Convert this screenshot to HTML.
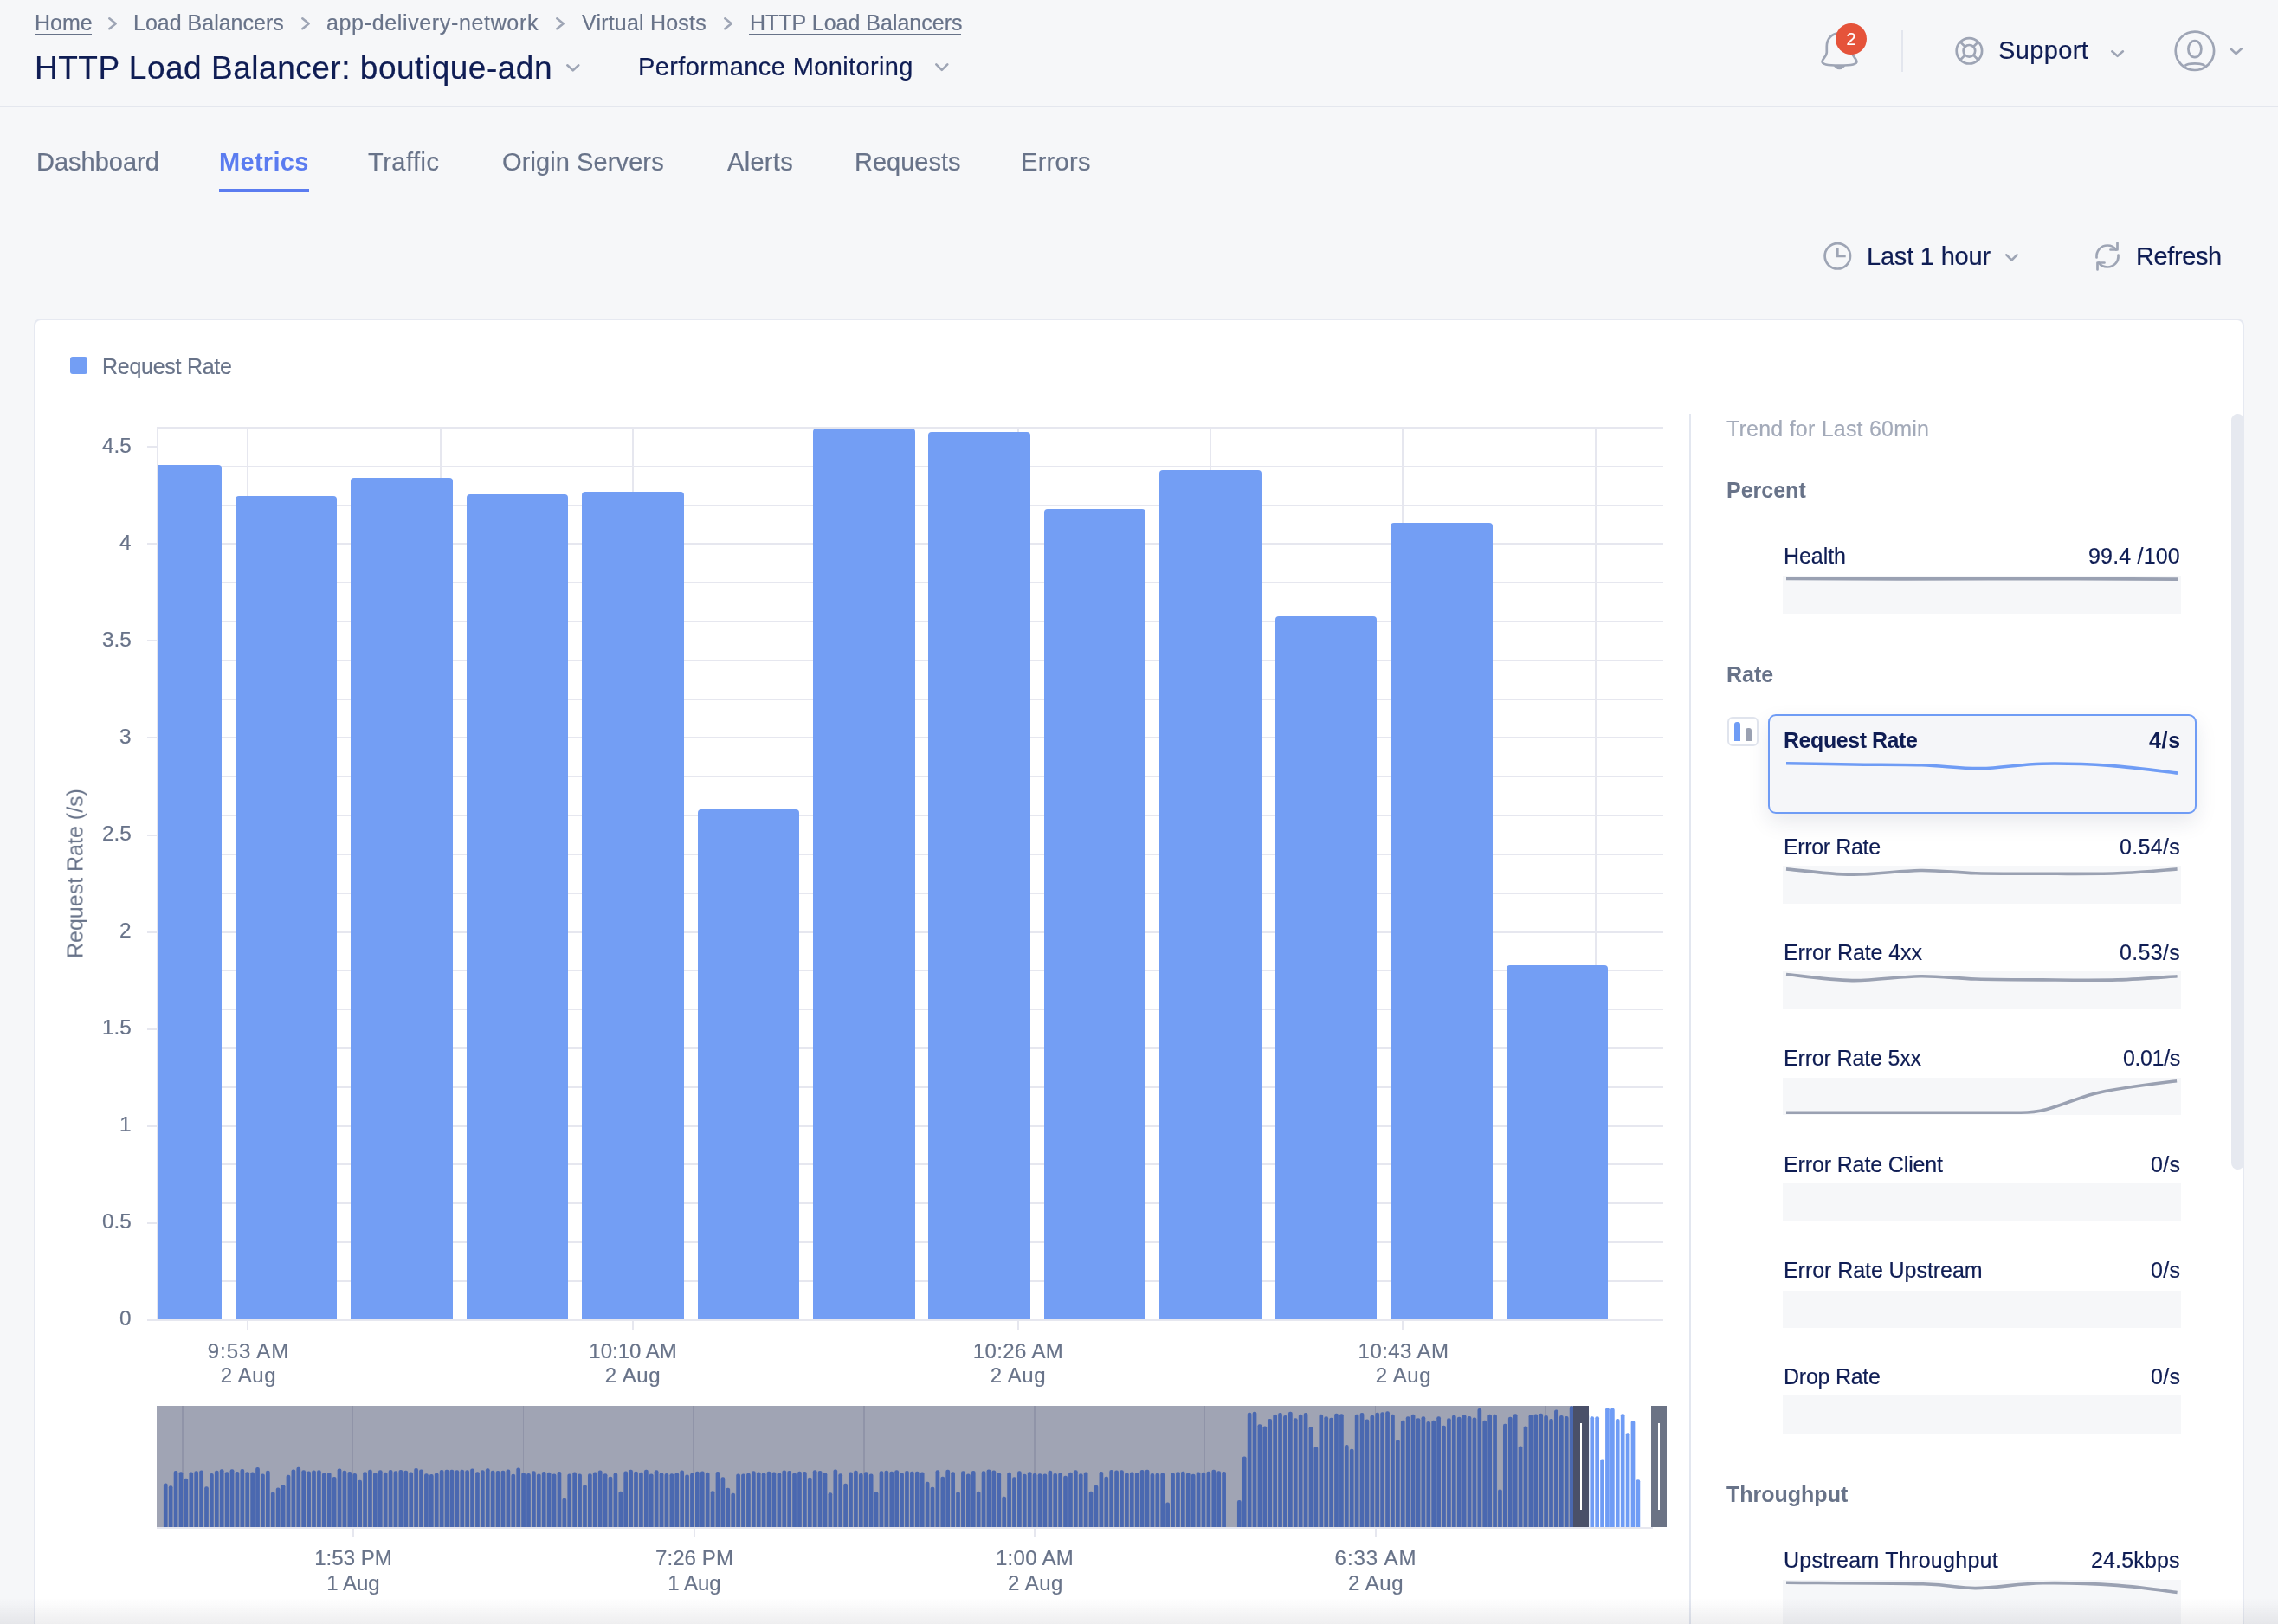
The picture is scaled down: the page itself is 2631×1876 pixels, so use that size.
<!DOCTYPE html>
<html><head><meta charset="utf-8"><title>HTTP Load Balancer</title>
<style>
html,body{margin:0;padding:0;width:2631px;height:1876px;overflow:hidden;background:#f6f7f9;font-family:"Liberation Sans", sans-serif;}
.t{position:absolute;line-height:1;white-space:nowrap;will-change:transform;}
.w{-webkit-text-stroke:0.2px currentColor;}
.r{position:absolute;}
.s{position:absolute;overflow:visible;}
</style></head><body>
<div class="t w" style="top:13.94px;font-size:25px;color:#687389;left:39.50px;">Home</div><div class="r" style="left:39.50px;top:39.20px;width:66.00px;height:2.00px;background:#687389;"></div><svg class="s" style="left:123px;top:18px;" width="14" height="18.5" viewBox="0 0 14 18.5"><polyline points="3.30,3.30 10.70,9.25 3.30,15.20" fill="none" stroke="#9ea5b5" stroke-width="2.6" stroke-linecap="round" stroke-linejoin="round"/></svg><div class="t w" style="top:13.94px;font-size:25px;color:#687389;left:154.40px;">Load Balancers</div><svg class="s" style="left:346px;top:18px;" width="14" height="18.5" viewBox="0 0 14 18.5"><polyline points="3.30,3.30 10.70,9.25 3.30,15.20" fill="none" stroke="#9ea5b5" stroke-width="2.6" stroke-linecap="round" stroke-linejoin="round"/></svg><div class="t w" style="top:13.94px;font-size:25px;color:#687389;letter-spacing:0.65px;left:376.70px;">app-delivery-network</div><svg class="s" style="left:640px;top:18px;" width="14" height="18.5" viewBox="0 0 14 18.5"><polyline points="3.30,3.30 10.70,9.25 3.30,15.20" fill="none" stroke="#9ea5b5" stroke-width="2.6" stroke-linecap="round" stroke-linejoin="round"/></svg><div class="t w" style="top:13.94px;font-size:25px;color:#687389;letter-spacing:0.2px;left:671.80px;">Virtual Hosts</div><svg class="s" style="left:834px;top:18px;" width="14" height="18.5" viewBox="0 0 14 18.5"><polyline points="3.30,3.30 10.70,9.25 3.30,15.20" fill="none" stroke="#9ea5b5" stroke-width="2.6" stroke-linecap="round" stroke-linejoin="round"/></svg><div class="t w" style="top:13.94px;font-size:25px;color:#687389;left:865.60px;">HTTP Load Balancers</div><div class="r" style="left:865.40px;top:39.20px;width:244.30px;height:2.00px;background:#687389;"></div><div class="t w" style="top:59.98px;font-size:37px;color:#0f1d54;letter-spacing:0.52px;left:39.50px;">HTTP Load Balancer: boutique-adn</div><svg class="s" style="left:652.2px;top:71.5px;" width="19.6" height="12.7" viewBox="0 0 19.6 12.7"><polyline points="3.30,3.30 9.80,9.40 16.30,3.30" fill="none" stroke="#9ea5b5" stroke-width="2.6" stroke-linecap="round" stroke-linejoin="round"/></svg><div class="t w" style="top:62.55px;font-size:29px;color:#0f1d54;letter-spacing:0.38px;left:737.00px;">Performance Monitoring</div><svg class="s" style="left:1077.8px;top:70.5px;" width="19.6" height="13.1" viewBox="0 0 19.6 13.1"><polyline points="3.30,3.30 9.80,9.80 16.30,3.30" fill="none" stroke="#9ea5b5" stroke-width="2.6" stroke-linecap="round" stroke-linejoin="round"/></svg><div class="r" style="left:0.00px;top:122.00px;width:2631.00px;height:2.00px;background:#e4e7ee;"></div><svg class="s" style="left:2098px;top:30px;" width="60" height="56" viewBox="0 0 60 56">
<path d="M26.5 8.3 C17.5 8.3 11.8 15 11.8 23.5 L11.8 30.5 C11.8 35 7.2 37.3 6.6 40.8 C6.1 44.2 11.5 45.6 26.5 45.6 C41.5 45.6 46.9 44.2 46.4 40.8 C45.8 37.3 41.2 35 41.2 30.5 L41.2 23.5 C41.2 15 35.5 8.3 26.5 8.3 Z" fill="none" stroke="#9ea5b5" stroke-width="2.7"/>
<path d="M20.8 46.5 Q26.5 52.8 32.2 46.5 Z" fill="#9ea5b5" stroke="#9ea5b5" stroke-width="1.2" stroke-linejoin="round"/>
</svg><div class="r" style="left:2120.1px;top:26.9px;width:35.8px;height:35.8px;border-radius:50%;background:#e5533a"></div><div class="t w" style="top:34.97px;font-size:20px;color:#ffffff;left:2138.00px;transform:translateX(-50%);">2</div><div class="r" style="left:2196.00px;top:35.30px;width:2.00px;height:47.40px;background:#e3e6ee;"></div><svg class="s" style="left:2256px;top:40px;" width="38" height="38" viewBox="0 0 38 38">
<circle cx="18.4" cy="18.8" r="14.7" fill="none" stroke="#9ea5b5" stroke-width="2.7"/>
<circle cx="18.4" cy="18.8" r="6.8" fill="none" stroke="#9ea5b5" stroke-width="2.7"/>
<path d="M8 8.4 L13.6 14 M28.8 8.4 L23.2 14 M8 29.2 L13.6 23.6 M28.8 29.2 L23.2 23.6" stroke="#9ea5b5" stroke-width="2.7"/>
</svg><div class="t w" style="top:44.45px;font-size:29px;color:#0f1d54;letter-spacing:0.38px;left:2307.60px;">Support</div><svg class="s" style="left:2435.5px;top:56px;" width="19.2" height="12.1" viewBox="0 0 19.2 12.1"><polyline points="3.30,3.30 9.60,8.80 15.90,3.30" fill="none" stroke="#9ea5b5" stroke-width="2.6" stroke-linecap="round" stroke-linejoin="round"/></svg><svg class="s" style="left:2508px;top:32px;" width="54" height="54" viewBox="0 0 54 54">
<circle cx="26.9" cy="26.8" r="22.2" fill="none" stroke="#9ea5b5" stroke-width="2.7"/>
<ellipse cx="26.9" cy="24.7" rx="7.5" ry="9.5" fill="none" stroke="#9ea5b5" stroke-width="2.7"/>
<path d="M15.5 44 C19 40.5 34.8 40.5 38.5 44" fill="none" stroke="#9ea5b5" stroke-width="2.7"/>
</svg><svg class="s" style="left:2573.4px;top:53px;" width="19.2" height="12.4" viewBox="0 0 19.2 12.4"><polyline points="3.30,3.30 9.60,9.10 15.90,3.30" fill="none" stroke="#9ea5b5" stroke-width="2.6" stroke-linecap="round" stroke-linejoin="round"/></svg><div class="t w" style="top:172.65px;font-size:29px;color:#687389;left:42.10px;">Dashboard</div><div class="t" style="top:172.65px;font-size:29px;color:#5b7cf0;font-weight:700;letter-spacing:0.3px;left:252.90px;">Metrics</div><div class="r" style="left:253.00px;top:218.20px;width:103.80px;height:3.60px;background:#5b7cf0;"></div><div class="t w" style="top:172.65px;font-size:29px;color:#687389;letter-spacing:0.5px;left:424.70px;">Traffic</div><div class="t w" style="top:172.65px;font-size:29px;color:#687389;letter-spacing:0.1px;left:580.00px;">Origin Servers</div><div class="t w" style="top:172.65px;font-size:29px;color:#687389;letter-spacing:0.3px;left:839.80px;">Alerts</div><div class="t w" style="top:172.65px;font-size:29px;color:#687389;left:987.40px;">Requests</div><div class="t w" style="top:172.65px;font-size:29px;color:#687389;letter-spacing:0.3px;left:1179.00px;">Errors</div><svg class="s" style="left:2104px;top:278px;" width="36" height="36" viewBox="0 0 36 36">
<circle cx="18.3" cy="17.8" r="14.7" fill="none" stroke="#9ea5b5" stroke-width="2.7"/>
<path d="M18.3 8.3 L18.3 17.8 L27.7 17.8" fill="none" stroke="#9ea5b5" stroke-width="2.7"/>
</svg><div class="t w" style="top:281.55px;font-size:29px;color:#0f1d54;letter-spacing:-0.2px;left:2155.80px;">Last 1 hour</div><svg class="s" style="left:2314px;top:290.9px;" width="18.8" height="12.8" viewBox="0 0 18.8 12.8"><polyline points="3.30,3.30 9.40,9.50 15.50,3.30" fill="none" stroke="#9ea5b5" stroke-width="2.6" stroke-linecap="round" stroke-linejoin="round"/></svg><svg class="s" style="left:2415px;top:276px;" width="38" height="40" viewBox="0 0 38 40">
<path d="M6.5 21.5 C5.8 13 12 7.5 19 7.5 C23.5 7.5 27 9.5 29 12.5" fill="none" stroke="#9ea5b5" stroke-width="2.7" stroke-linecap="round"/>
<path d="M30.5 4.5 L30.5 12.5 L22.5 12.5" fill="none" stroke="#9ea5b5" stroke-width="2.7" stroke-linecap="round" stroke-linejoin="round"/>
<path d="M31.5 18.5 C32.2 27 26 32.5 19 32.5 C14.5 32.5 11 30.5 9 27.5" fill="none" stroke="#9ea5b5" stroke-width="2.7" stroke-linecap="round"/>
<path d="M7.5 35.5 L7.5 27.5 L15.5 27.5" fill="none" stroke="#9ea5b5" stroke-width="2.7" stroke-linecap="round" stroke-linejoin="round"/>
</svg><div class="t w" style="top:281.55px;font-size:29px;color:#0f1d54;letter-spacing:-0.4px;left:2467.00px;">Refresh</div><div class="r" style="left:39px;top:368px;width:2553px;height:1600px;background:#fff;border:2px solid #e6e9f1;border-radius:8px;box-sizing:border-box"></div><div class="r" style="left:81.00px;top:412.00px;width:20.00px;height:20.00px;background:#739ef4;border-radius:3px;"></div><div class="t w" style="top:411.14px;font-size:25px;color:#687389;letter-spacing:-0.27px;left:117.70px;">Request Rate</div><div class="r" style="left:182.00px;top:1478.79px;width:1739.00px;height:2.00px;background:#e6e7ef;"></div><div class="r" style="left:182.00px;top:1433.98px;width:1739.00px;height:2.00px;background:#e6e7ef;"></div><div class="r" style="left:182.00px;top:1389.18px;width:1739.00px;height:2.00px;background:#e6e7ef;"></div><div class="r" style="left:182.00px;top:1344.37px;width:1739.00px;height:2.00px;background:#e6e7ef;"></div><div class="r" style="left:182.00px;top:1299.56px;width:1739.00px;height:2.00px;background:#e6e7ef;"></div><div class="r" style="left:182.00px;top:1254.75px;width:1739.00px;height:2.00px;background:#e6e7ef;"></div><div class="r" style="left:182.00px;top:1209.94px;width:1739.00px;height:2.00px;background:#e6e7ef;"></div><div class="r" style="left:182.00px;top:1165.14px;width:1739.00px;height:2.00px;background:#e6e7ef;"></div><div class="r" style="left:182.00px;top:1120.33px;width:1739.00px;height:2.00px;background:#e6e7ef;"></div><div class="r" style="left:182.00px;top:1075.52px;width:1739.00px;height:2.00px;background:#e6e7ef;"></div><div class="r" style="left:182.00px;top:1030.71px;width:1739.00px;height:2.00px;background:#e6e7ef;"></div><div class="r" style="left:182.00px;top:985.90px;width:1739.00px;height:2.00px;background:#e6e7ef;"></div><div class="r" style="left:182.00px;top:941.10px;width:1739.00px;height:2.00px;background:#e6e7ef;"></div><div class="r" style="left:182.00px;top:896.29px;width:1739.00px;height:2.00px;background:#e6e7ef;"></div><div class="r" style="left:182.00px;top:851.48px;width:1739.00px;height:2.00px;background:#e6e7ef;"></div><div class="r" style="left:182.00px;top:806.67px;width:1739.00px;height:2.00px;background:#e6e7ef;"></div><div class="r" style="left:182.00px;top:761.86px;width:1739.00px;height:2.00px;background:#e6e7ef;"></div><div class="r" style="left:182.00px;top:717.06px;width:1739.00px;height:2.00px;background:#e6e7ef;"></div><div class="r" style="left:182.00px;top:672.25px;width:1739.00px;height:2.00px;background:#e6e7ef;"></div><div class="r" style="left:182.00px;top:627.44px;width:1739.00px;height:2.00px;background:#e6e7ef;"></div><div class="r" style="left:182.00px;top:582.63px;width:1739.00px;height:2.00px;background:#e6e7ef;"></div><div class="r" style="left:182.00px;top:537.82px;width:1739.00px;height:2.00px;background:#e6e7ef;"></div><div class="r" style="left:182.00px;top:493.02px;width:1739.00px;height:2.00px;background:#e6e7ef;"></div><div class="r" style="left:181.00px;top:493.02px;width:2.00px;height:1031.58px;background:#e6e7ef;"></div><div class="r" style="left:285.30px;top:493.02px;width:2.00px;height:1031.58px;background:#e6e7ef;"></div><div class="r" style="left:507.65px;top:493.02px;width:2.00px;height:1031.58px;background:#e6e7ef;"></div><div class="r" style="left:730.00px;top:493.02px;width:2.00px;height:1031.58px;background:#e6e7ef;"></div><div class="r" style="left:952.35px;top:493.02px;width:2.00px;height:1031.58px;background:#e6e7ef;"></div><div class="r" style="left:1174.70px;top:493.02px;width:2.00px;height:1031.58px;background:#e6e7ef;"></div><div class="r" style="left:1397.05px;top:493.02px;width:2.00px;height:1031.58px;background:#e6e7ef;"></div><div class="r" style="left:1619.40px;top:493.02px;width:2.00px;height:1031.58px;background:#e6e7ef;"></div><div class="r" style="left:1841.75px;top:493.02px;width:2.00px;height:1031.58px;background:#e6e7ef;"></div><div class="r" style="left:169.50px;top:1523.60px;width:12.00px;height:2.00px;background:#e6e7ef;"></div><div class="t w" style="top:1511.35px;font-size:24.4px;color:#687389;right:2479.00px;">0</div><div class="r" style="left:169.50px;top:1411.58px;width:12.00px;height:2.00px;background:#e6e7ef;"></div><div class="t w" style="top:1399.33px;font-size:24.4px;color:#687389;right:2479.00px;">0.5</div><div class="r" style="left:169.50px;top:1299.56px;width:12.00px;height:2.00px;background:#e6e7ef;"></div><div class="t w" style="top:1287.31px;font-size:24.4px;color:#687389;right:2479.00px;">1</div><div class="r" style="left:169.50px;top:1187.54px;width:12.00px;height:2.00px;background:#e6e7ef;"></div><div class="t w" style="top:1175.29px;font-size:24.4px;color:#687389;right:2479.00px;">1.5</div><div class="r" style="left:169.50px;top:1075.52px;width:12.00px;height:2.00px;background:#e6e7ef;"></div><div class="t w" style="top:1063.27px;font-size:24.4px;color:#687389;right:2479.00px;">2</div><div class="r" style="left:169.50px;top:963.50px;width:12.00px;height:2.00px;background:#e6e7ef;"></div><div class="t w" style="top:951.25px;font-size:24.4px;color:#687389;right:2479.00px;">2.5</div><div class="r" style="left:169.50px;top:851.48px;width:12.00px;height:2.00px;background:#e6e7ef;"></div><div class="t w" style="top:839.23px;font-size:24.4px;color:#687389;right:2479.00px;">3</div><div class="r" style="left:169.50px;top:739.46px;width:12.00px;height:2.00px;background:#e6e7ef;"></div><div class="t w" style="top:727.21px;font-size:24.4px;color:#687389;right:2479.00px;">3.5</div><div class="r" style="left:169.50px;top:627.44px;width:12.00px;height:2.00px;background:#e6e7ef;"></div><div class="t w" style="top:615.19px;font-size:24.4px;color:#687389;right:2479.00px;">4</div><div class="r" style="left:169.50px;top:515.42px;width:12.00px;height:2.00px;background:#e6e7ef;"></div><div class="t w" style="top:503.17px;font-size:24.4px;color:#687389;right:2479.00px;">4.5</div><div class="t" style="left:86.5px;top:1009.3px;font-size:25px;color:#687389;transform:translate(-50%,-50%) rotate(-90deg);line-height:1;white-space:nowrap">Request Rate (/s)</div><div class="r" style="left:182.00px;top:536.90px;width:73.85px;height:988.70px;background:#739ef4;border-radius:0 4px 0 0;"></div><div class="r" style="left:271.70px;top:572.80px;width:117.60px;height:952.80px;background:#739ef4;border-radius:4px 4px 0 0;"></div><div class="r" style="left:405.15px;top:552.30px;width:117.60px;height:973.30px;background:#739ef4;border-radius:4px 4px 0 0;"></div><div class="r" style="left:538.60px;top:570.50px;width:117.60px;height:955.10px;background:#739ef4;border-radius:4px 4px 0 0;"></div><div class="r" style="left:672.05px;top:568.10px;width:117.60px;height:957.50px;background:#739ef4;border-radius:4px 4px 0 0;"></div><div class="r" style="left:805.50px;top:935.20px;width:117.60px;height:590.40px;background:#739ef4;border-radius:4px 4px 0 0;"></div><div class="r" style="left:938.95px;top:494.60px;width:117.60px;height:1031.00px;background:#739ef4;border-radius:4px 4px 0 0;"></div><div class="r" style="left:1072.40px;top:498.60px;width:117.60px;height:1027.00px;background:#739ef4;border-radius:4px 4px 0 0;"></div><div class="r" style="left:1205.85px;top:587.90px;width:117.60px;height:937.70px;background:#739ef4;border-radius:4px 4px 0 0;"></div><div class="r" style="left:1339.30px;top:543.20px;width:117.60px;height:982.40px;background:#739ef4;border-radius:4px 4px 0 0;"></div><div class="r" style="left:1472.75px;top:711.50px;width:117.60px;height:814.10px;background:#739ef4;border-radius:4px 4px 0 0;"></div><div class="r" style="left:1606.20px;top:604.10px;width:117.60px;height:921.50px;background:#739ef4;border-radius:4px 4px 0 0;"></div><div class="r" style="left:1739.65px;top:1114.50px;width:117.60px;height:411.10px;background:#739ef4;border-radius:4px 4px 0 0;"></div><div class="r" style="left:170.00px;top:1523.60px;width:1751.00px;height:2.00px;background:#e6e7ef;"></div><div class="r" style="left:285.30px;top:1524.60px;width:2.00px;height:11.00px;background:#e6e7ef;"></div><div class="t w" style="top:1548.78px;font-size:24px;color:#687389;letter-spacing:0.89px;left:286.75px;transform:translateX(-50%);">9:53 AM</div><div class="t w" style="top:1577.38px;font-size:24px;color:#687389;letter-spacing:0.58px;left:286.59px;transform:translateX(-50%);">2 Aug</div><div class="r" style="left:730.00px;top:1524.60px;width:2.00px;height:11.00px;background:#e6e7ef;"></div><div class="t w" style="top:1548.78px;font-size:24px;color:#687389;left:731.00px;transform:translateX(-50%);">10:10 AM</div><div class="t w" style="top:1577.38px;font-size:24px;color:#687389;letter-spacing:0.6px;left:731.30px;transform:translateX(-50%);">2 Aug</div><div class="r" style="left:1174.70px;top:1524.60px;width:2.00px;height:11.00px;background:#e6e7ef;"></div><div class="t w" style="top:1548.78px;font-size:24px;color:#687389;letter-spacing:0.39px;left:1175.89px;transform:translateX(-50%);">10:26 AM</div><div class="t w" style="top:1577.38px;font-size:24px;color:#687389;letter-spacing:0.6px;left:1176.00px;transform:translateX(-50%);">2 Aug</div><div class="r" style="left:1619.40px;top:1524.60px;width:2.00px;height:11.00px;background:#e6e7ef;"></div><div class="t w" style="top:1548.78px;font-size:24px;color:#687389;letter-spacing:0.42px;left:1620.61px;transform:translateX(-50%);">10:43 AM</div><div class="t w" style="top:1577.38px;font-size:24px;color:#687389;letter-spacing:0.6px;left:1620.70px;transform:translateX(-50%);">2 Aug</div><div class="r" style="left:181.00px;top:1624.00px;width:1636.00px;height:139.80px;background:#a0a4b4;"></div><div class="r" style="left:210.05px;top:1624.00px;width:1.50px;height:139.80px;background:#9094a8;"></div><div class="r" style="left:406.85px;top:1624.00px;width:1.50px;height:139.80px;background:#9094a8;"></div><div class="r" style="left:603.65px;top:1624.00px;width:1.50px;height:139.80px;background:#9094a8;"></div><div class="r" style="left:800.45px;top:1624.00px;width:1.50px;height:139.80px;background:#9094a8;"></div><div class="r" style="left:997.25px;top:1624.00px;width:1.50px;height:139.80px;background:#9094a8;"></div><div class="r" style="left:1194.05px;top:1624.00px;width:1.50px;height:139.80px;background:#9094a8;"></div><div class="r" style="left:1390.85px;top:1624.00px;width:1.50px;height:139.80px;background:#9094a8;"></div><div class="r" style="left:1587.65px;top:1624.00px;width:1.50px;height:139.80px;background:#9094a8;"></div><div class="r" style="left:1784.45px;top:1624.00px;width:1.50px;height:139.80px;background:#9094a8;"></div><svg class="s" style="left:181px;top:1624px;" width="1733" height="139" viewBox="0 0 1733 139"><rect x="7.90" y="89.40" width="4.7" height="52.40" rx="2" fill="#4a68b0"/><rect x="13.81" y="92.20" width="4.7" height="49.60" rx="2" fill="#4a68b0"/><rect x="19.71" y="75.10" width="4.7" height="66.70" rx="2" fill="#4a68b0"/><rect x="25.62" y="76.20" width="4.7" height="65.60" rx="2" fill="#4a68b0"/><rect x="31.52" y="83.80" width="4.7" height="58.00" rx="2" fill="#4a68b0"/><rect x="37.43" y="76.60" width="4.7" height="65.20" rx="2" fill="#4a68b0"/><rect x="43.33" y="75.30" width="4.7" height="66.50" rx="2" fill="#4a68b0"/><rect x="49.24" y="74.50" width="4.7" height="67.30" rx="2" fill="#4a68b0"/><rect x="55.14" y="93.20" width="4.7" height="48.60" rx="2" fill="#4a68b0"/><rect x="61.05" y="77.90" width="4.7" height="63.90" rx="2" fill="#4a68b0"/><rect x="66.95" y="74.70" width="4.7" height="67.10" rx="2" fill="#4a68b0"/><rect x="72.86" y="73.20" width="4.7" height="68.60" rx="2" fill="#4a68b0"/><rect x="78.76" y="76.20" width="4.7" height="65.60" rx="2" fill="#4a68b0"/><rect x="84.67" y="73.20" width="4.7" height="68.60" rx="2" fill="#4a68b0"/><rect x="90.57" y="76.00" width="4.7" height="65.80" rx="2" fill="#4a68b0"/><rect x="96.48" y="73.00" width="4.7" height="68.80" rx="2" fill="#4a68b0"/><rect x="102.38" y="76.20" width="4.7" height="65.60" rx="2" fill="#4a68b0"/><rect x="108.29" y="76.60" width="4.7" height="65.20" rx="2" fill="#4a68b0"/><rect x="114.19" y="71.10" width="4.7" height="70.70" rx="2" fill="#4a68b0"/><rect x="120.10" y="78.50" width="4.7" height="63.30" rx="2" fill="#4a68b0"/><rect x="126.00" y="74.70" width="4.7" height="67.10" rx="2" fill="#4a68b0"/><rect x="131.91" y="99.60" width="4.7" height="42.20" rx="2" fill="#4a68b0"/><rect x="137.81" y="94.50" width="4.7" height="47.30" rx="2" fill="#4a68b0"/><rect x="143.72" y="91.30" width="4.7" height="50.50" rx="2" fill="#4a68b0"/><rect x="149.62" y="79.80" width="4.7" height="62.00" rx="2" fill="#4a68b0"/><rect x="155.52" y="73.40" width="4.7" height="68.40" rx="2" fill="#4a68b0"/><rect x="161.43" y="70.80" width="4.7" height="71.00" rx="2" fill="#4a68b0"/><rect x="167.34" y="74.30" width="4.7" height="67.50" rx="2" fill="#4a68b0"/><rect x="173.24" y="75.60" width="4.7" height="66.20" rx="2" fill="#4a68b0"/><rect x="179.14" y="74.50" width="4.7" height="67.30" rx="2" fill="#4a68b0"/><rect x="185.05" y="74.30" width="4.7" height="67.50" rx="2" fill="#4a68b0"/><rect x="190.96" y="77.50" width="4.7" height="64.30" rx="2" fill="#4a68b0"/><rect x="196.86" y="76.90" width="4.7" height="64.90" rx="2" fill="#4a68b0"/><rect x="202.76" y="82.00" width="4.7" height="59.80" rx="2" fill="#4a68b0"/><rect x="208.67" y="72.40" width="4.7" height="69.40" rx="2" fill="#4a68b0"/><rect x="214.58" y="74.70" width="4.7" height="67.10" rx="2" fill="#4a68b0"/><rect x="220.48" y="76.00" width="4.7" height="65.80" rx="2" fill="#4a68b0"/><rect x="226.38" y="78.10" width="4.7" height="63.70" rx="2" fill="#4a68b0"/><rect x="232.29" y="85.80" width="4.7" height="56.00" rx="2" fill="#4a68b0"/><rect x="238.20" y="76.20" width="4.7" height="65.60" rx="2" fill="#4a68b0"/><rect x="244.10" y="73.80" width="4.7" height="68.00" rx="2" fill="#4a68b0"/><rect x="250.00" y="77.10" width="4.7" height="64.70" rx="2" fill="#4a68b0"/><rect x="255.91" y="74.30" width="4.7" height="67.50" rx="2" fill="#4a68b0"/><rect x="261.82" y="76.80" width="4.7" height="65.00" rx="2" fill="#4a68b0"/><rect x="267.72" y="73.90" width="4.7" height="67.90" rx="2" fill="#4a68b0"/><rect x="273.62" y="75.30" width="4.7" height="66.50" rx="2" fill="#4a68b0"/><rect x="279.53" y="73.90" width="4.7" height="67.90" rx="2" fill="#4a68b0"/><rect x="285.44" y="74.80" width="4.7" height="67.00" rx="2" fill="#4a68b0"/><rect x="291.34" y="76.60" width="4.7" height="65.20" rx="2" fill="#4a68b0"/><rect x="297.25" y="72.00" width="4.7" height="69.80" rx="2" fill="#4a68b0"/><rect x="303.15" y="73.40" width="4.7" height="68.40" rx="2" fill="#4a68b0"/><rect x="309.06" y="78.30" width="4.7" height="63.50" rx="2" fill="#4a68b0"/><rect x="314.96" y="79.00" width="4.7" height="62.80" rx="2" fill="#4a68b0"/><rect x="320.87" y="77.50" width="4.7" height="64.30" rx="2" fill="#4a68b0"/><rect x="326.77" y="74.10" width="4.7" height="67.70" rx="2" fill="#4a68b0"/><rect x="332.68" y="73.80" width="4.7" height="68.00" rx="2" fill="#4a68b0"/><rect x="338.58" y="73.80" width="4.7" height="68.00" rx="2" fill="#4a68b0"/><rect x="344.49" y="74.30" width="4.7" height="67.50" rx="2" fill="#4a68b0"/><rect x="350.39" y="73.80" width="4.7" height="68.00" rx="2" fill="#4a68b0"/><rect x="356.30" y="74.30" width="4.7" height="67.50" rx="2" fill="#4a68b0"/><rect x="362.20" y="72.60" width="4.7" height="69.20" rx="2" fill="#4a68b0"/><rect x="368.11" y="76.20" width="4.7" height="65.60" rx="2" fill="#4a68b0"/><rect x="374.01" y="74.30" width="4.7" height="67.50" rx="2" fill="#4a68b0"/><rect x="379.92" y="72.20" width="4.7" height="69.60" rx="2" fill="#4a68b0"/><rect x="385.82" y="74.70" width="4.7" height="67.10" rx="2" fill="#4a68b0"/><rect x="391.73" y="75.10" width="4.7" height="66.70" rx="2" fill="#4a68b0"/><rect x="397.63" y="74.70" width="4.7" height="67.10" rx="2" fill="#4a68b0"/><rect x="403.53" y="73.50" width="4.7" height="68.30" rx="2" fill="#4a68b0"/><rect x="409.44" y="78.80" width="4.7" height="63.00" rx="2" fill="#4a68b0"/><rect x="415.35" y="71.50" width="4.7" height="70.30" rx="2" fill="#4a68b0"/><rect x="421.25" y="77.08" width="4.7" height="64.72" rx="2" fill="#4a68b0"/><rect x="427.15" y="78.00" width="4.7" height="63.80" rx="2" fill="#4a68b0"/><rect x="433.06" y="75.35" width="4.7" height="66.45" rx="2" fill="#4a68b0"/><rect x="438.97" y="78.42" width="4.7" height="63.38" rx="2" fill="#4a68b0"/><rect x="444.87" y="75.96" width="4.7" height="65.84" rx="2" fill="#4a68b0"/><rect x="450.77" y="76.86" width="4.7" height="64.94" rx="2" fill="#4a68b0"/><rect x="456.68" y="78.49" width="4.7" height="63.31" rx="2" fill="#4a68b0"/><rect x="462.59" y="76.11" width="4.7" height="65.69" rx="2" fill="#4a68b0"/><rect x="468.49" y="106.80" width="4.7" height="35.00" rx="2" fill="#4a68b0"/><rect x="474.39" y="78.60" width="4.7" height="63.20" rx="2" fill="#4a68b0"/><rect x="480.30" y="76.50" width="4.7" height="65.30" rx="2" fill="#4a68b0"/><rect x="486.21" y="78.43" width="4.7" height="63.37" rx="2" fill="#4a68b0"/><rect x="492.11" y="91.30" width="4.7" height="50.50" rx="2" fill="#4a68b0"/><rect x="498.01" y="78.32" width="4.7" height="63.48" rx="2" fill="#4a68b0"/><rect x="503.92" y="76.55" width="4.7" height="65.25" rx="2" fill="#4a68b0"/><rect x="509.83" y="74.42" width="4.7" height="67.38" rx="2" fill="#4a68b0"/><rect x="515.73" y="78.14" width="4.7" height="63.66" rx="2" fill="#4a68b0"/><rect x="521.63" y="81.80" width="4.7" height="60.00" rx="2" fill="#4a68b0"/><rect x="527.54" y="77.62" width="4.7" height="64.18" rx="2" fill="#4a68b0"/><rect x="533.45" y="98.80" width="4.7" height="43.00" rx="2" fill="#4a68b0"/><rect x="539.35" y="75.47" width="4.7" height="66.33" rx="2" fill="#4a68b0"/><rect x="545.25" y="73.78" width="4.7" height="68.02" rx="2" fill="#4a68b0"/><rect x="551.16" y="75.74" width="4.7" height="66.06" rx="2" fill="#4a68b0"/><rect x="557.07" y="76.70" width="4.7" height="65.10" rx="2" fill="#4a68b0"/><rect x="562.97" y="73.63" width="4.7" height="68.17" rx="2" fill="#4a68b0"/><rect x="568.88" y="78.55" width="4.7" height="63.25" rx="2" fill="#4a68b0"/><rect x="574.78" y="74.25" width="4.7" height="67.55" rx="2" fill="#4a68b0"/><rect x="580.68" y="77.27" width="4.7" height="64.53" rx="2" fill="#4a68b0"/><rect x="586.59" y="78.04" width="4.7" height="63.76" rx="2" fill="#4a68b0"/><rect x="592.50" y="78.18" width="4.7" height="63.62" rx="2" fill="#4a68b0"/><rect x="598.40" y="77.17" width="4.7" height="64.63" rx="2" fill="#4a68b0"/><rect x="604.30" y="74.47" width="4.7" height="67.33" rx="2" fill="#4a68b0"/><rect x="610.21" y="79.40" width="4.7" height="62.40" rx="2" fill="#4a68b0"/><rect x="616.12" y="77.84" width="4.7" height="63.96" rx="2" fill="#4a68b0"/><rect x="622.02" y="75.72" width="4.7" height="66.08" rx="2" fill="#4a68b0"/><rect x="627.92" y="75.41" width="4.7" height="66.39" rx="2" fill="#4a68b0"/><rect x="633.83" y="76.83" width="4.7" height="64.97" rx="2" fill="#4a68b0"/><rect x="639.74" y="98.30" width="4.7" height="43.50" rx="2" fill="#4a68b0"/><rect x="645.64" y="75.90" width="4.7" height="65.90" rx="2" fill="#4a68b0"/><rect x="651.54" y="82.20" width="4.7" height="59.60" rx="2" fill="#4a68b0"/><rect x="657.45" y="94.80" width="4.7" height="47.00" rx="2" fill="#4a68b0"/><rect x="663.36" y="100.80" width="4.7" height="41.00" rx="2" fill="#4a68b0"/><rect x="669.26" y="78.47" width="4.7" height="63.33" rx="2" fill="#4a68b0"/><rect x="675.16" y="78.48" width="4.7" height="63.32" rx="2" fill="#4a68b0"/><rect x="681.07" y="77.71" width="4.7" height="64.09" rx="2" fill="#4a68b0"/><rect x="686.98" y="75.19" width="4.7" height="66.61" rx="2" fill="#4a68b0"/><rect x="692.88" y="76.53" width="4.7" height="65.27" rx="2" fill="#4a68b0"/><rect x="698.78" y="77.14" width="4.7" height="64.66" rx="2" fill="#4a68b0"/><rect x="704.69" y="75.70" width="4.7" height="66.10" rx="2" fill="#4a68b0"/><rect x="710.60" y="76.40" width="4.7" height="65.40" rx="2" fill="#4a68b0"/><rect x="716.50" y="77.21" width="4.7" height="64.59" rx="2" fill="#4a68b0"/><rect x="722.40" y="74.59" width="4.7" height="67.21" rx="2" fill="#4a68b0"/><rect x="728.31" y="75.10" width="4.7" height="66.70" rx="2" fill="#4a68b0"/><rect x="734.22" y="77.51" width="4.7" height="64.29" rx="2" fill="#4a68b0"/><rect x="740.12" y="75.76" width="4.7" height="66.04" rx="2" fill="#4a68b0"/><rect x="746.02" y="76.02" width="4.7" height="65.78" rx="2" fill="#4a68b0"/><rect x="751.93" y="82.80" width="4.7" height="59.00" rx="2" fill="#4a68b0"/><rect x="757.84" y="74.16" width="4.7" height="67.64" rx="2" fill="#4a68b0"/><rect x="763.74" y="74.93" width="4.7" height="66.87" rx="2" fill="#4a68b0"/><rect x="769.64" y="77.27" width="4.7" height="64.53" rx="2" fill="#4a68b0"/><rect x="775.55" y="100.20" width="4.7" height="41.60" rx="2" fill="#4a68b0"/><rect x="781.46" y="73.61" width="4.7" height="68.19" rx="2" fill="#4a68b0"/><rect x="787.36" y="78.17" width="4.7" height="63.63" rx="2" fill="#4a68b0"/><rect x="793.26" y="89.80" width="4.7" height="52.00" rx="2" fill="#4a68b0"/><rect x="799.17" y="76.58" width="4.7" height="65.22" rx="2" fill="#4a68b0"/><rect x="805.08" y="74.79" width="4.7" height="67.01" rx="2" fill="#4a68b0"/><rect x="810.98" y="77.99" width="4.7" height="63.81" rx="2" fill="#4a68b0"/><rect x="816.88" y="76.21" width="4.7" height="65.59" rx="2" fill="#4a68b0"/><rect x="822.79" y="78.59" width="4.7" height="63.21" rx="2" fill="#4a68b0"/><rect x="828.70" y="99.20" width="4.7" height="42.60" rx="2" fill="#4a68b0"/><rect x="834.60" y="75.26" width="4.7" height="66.54" rx="2" fill="#4a68b0"/><rect x="840.50" y="74.75" width="4.7" height="67.05" rx="2" fill="#4a68b0"/><rect x="846.41" y="75.76" width="4.7" height="66.04" rx="2" fill="#4a68b0"/><rect x="852.32" y="74.16" width="4.7" height="67.64" rx="2" fill="#4a68b0"/><rect x="858.22" y="77.14" width="4.7" height="64.66" rx="2" fill="#4a68b0"/><rect x="864.12" y="75.11" width="4.7" height="66.69" rx="2" fill="#4a68b0"/><rect x="870.03" y="75.65" width="4.7" height="66.15" rx="2" fill="#4a68b0"/><rect x="875.94" y="75.73" width="4.7" height="66.07" rx="2" fill="#4a68b0"/><rect x="881.84" y="76.38" width="4.7" height="65.42" rx="2" fill="#4a68b0"/><rect x="887.75" y="87.80" width="4.7" height="54.00" rx="2" fill="#4a68b0"/><rect x="893.65" y="93.80" width="4.7" height="48.00" rx="2" fill="#4a68b0"/><rect x="899.56" y="74.35" width="4.7" height="67.45" rx="2" fill="#4a68b0"/><rect x="905.46" y="81.80" width="4.7" height="60.00" rx="2" fill="#4a68b0"/><rect x="911.37" y="73.79" width="4.7" height="68.01" rx="2" fill="#4a68b0"/><rect x="917.27" y="76.29" width="4.7" height="65.51" rx="2" fill="#4a68b0"/><rect x="923.18" y="99.20" width="4.7" height="42.60" rx="2" fill="#4a68b0"/><rect x="929.08" y="75.28" width="4.7" height="66.52" rx="2" fill="#4a68b0"/><rect x="934.99" y="78.48" width="4.7" height="63.32" rx="2" fill="#4a68b0"/><rect x="940.89" y="75.08" width="4.7" height="66.72" rx="2" fill="#4a68b0"/><rect x="946.80" y="98.80" width="4.7" height="43.00" rx="2" fill="#4a68b0"/><rect x="952.70" y="75.37" width="4.7" height="66.43" rx="2" fill="#4a68b0"/><rect x="958.61" y="73.54" width="4.7" height="68.26" rx="2" fill="#4a68b0"/><rect x="964.51" y="74.44" width="4.7" height="67.36" rx="2" fill="#4a68b0"/><rect x="970.41" y="77.29" width="4.7" height="64.51" rx="2" fill="#4a68b0"/><rect x="976.32" y="104.80" width="4.7" height="37.00" rx="2" fill="#4a68b0"/><rect x="982.23" y="76.76" width="4.7" height="65.04" rx="2" fill="#4a68b0"/><rect x="988.13" y="82.20" width="4.7" height="59.60" rx="2" fill="#4a68b0"/><rect x="994.04" y="75.26" width="4.7" height="66.54" rx="2" fill="#4a68b0"/><rect x="999.94" y="78.68" width="4.7" height="63.12" rx="2" fill="#4a68b0"/><rect x="1005.85" y="76.35" width="4.7" height="65.45" rx="2" fill="#4a68b0"/><rect x="1011.75" y="77.91" width="4.7" height="63.89" rx="2" fill="#4a68b0"/><rect x="1017.65" y="78.18" width="4.7" height="63.62" rx="2" fill="#4a68b0"/><rect x="1023.56" y="78.49" width="4.7" height="63.31" rx="2" fill="#4a68b0"/><rect x="1029.47" y="74.73" width="4.7" height="67.07" rx="2" fill="#4a68b0"/><rect x="1035.37" y="78.11" width="4.7" height="63.69" rx="2" fill="#4a68b0"/><rect x="1041.28" y="77.49" width="4.7" height="64.31" rx="2" fill="#4a68b0"/><rect x="1047.18" y="80.80" width="4.7" height="61.00" rx="2" fill="#4a68b0"/><rect x="1053.09" y="76.73" width="4.7" height="65.07" rx="2" fill="#4a68b0"/><rect x="1058.99" y="74.18" width="4.7" height="67.62" rx="2" fill="#4a68b0"/><rect x="1064.90" y="78.37" width="4.7" height="63.43" rx="2" fill="#4a68b0"/><rect x="1070.80" y="76.42" width="4.7" height="65.38" rx="2" fill="#4a68b0"/><rect x="1076.71" y="98.80" width="4.7" height="43.00" rx="2" fill="#4a68b0"/><rect x="1082.61" y="91.80" width="4.7" height="50.00" rx="2" fill="#4a68b0"/><rect x="1088.52" y="75.89" width="4.7" height="65.91" rx="2" fill="#4a68b0"/><rect x="1094.42" y="81.80" width="4.7" height="60.00" rx="2" fill="#4a68b0"/><rect x="1100.33" y="74.12" width="4.7" height="67.68" rx="2" fill="#4a68b0"/><rect x="1106.23" y="74.46" width="4.7" height="67.34" rx="2" fill="#4a68b0"/><rect x="1112.14" y="74.22" width="4.7" height="67.58" rx="2" fill="#4a68b0"/><rect x="1118.04" y="77.32" width="4.7" height="64.48" rx="2" fill="#4a68b0"/><rect x="1123.95" y="76.60" width="4.7" height="65.20" rx="2" fill="#4a68b0"/><rect x="1129.85" y="76.90" width="4.7" height="64.90" rx="2" fill="#4a68b0"/><rect x="1135.76" y="74.11" width="4.7" height="67.69" rx="2" fill="#4a68b0"/><rect x="1141.66" y="73.72" width="4.7" height="68.08" rx="2" fill="#4a68b0"/><rect x="1147.57" y="78.00" width="4.7" height="63.80" rx="2" fill="#4a68b0"/><rect x="1153.47" y="77.87" width="4.7" height="63.93" rx="2" fill="#4a68b0"/><rect x="1159.38" y="77.57" width="4.7" height="64.23" rx="2" fill="#4a68b0"/><rect x="1165.28" y="111.50" width="4.7" height="30.30" rx="2" fill="#4a68b0"/><rect x="1171.19" y="77.56" width="4.7" height="64.24" rx="2" fill="#4a68b0"/><rect x="1177.09" y="76.23" width="4.7" height="65.57" rx="2" fill="#4a68b0"/><rect x="1183.00" y="75.68" width="4.7" height="66.12" rx="2" fill="#4a68b0"/><rect x="1188.90" y="77.41" width="4.7" height="64.39" rx="2" fill="#4a68b0"/><rect x="1194.81" y="78.78" width="4.7" height="63.02" rx="2" fill="#4a68b0"/><rect x="1200.71" y="76.58" width="4.7" height="65.22" rx="2" fill="#4a68b0"/><rect x="1206.62" y="76.84" width="4.7" height="64.96" rx="2" fill="#4a68b0"/><rect x="1212.52" y="75.80" width="4.7" height="66.00" rx="2" fill="#4a68b0"/><rect x="1218.43" y="73.75" width="4.7" height="68.05" rx="2" fill="#4a68b0"/><rect x="1224.33" y="75.14" width="4.7" height="66.66" rx="2" fill="#4a68b0"/><rect x="1230.24" y="76.07" width="4.7" height="65.73" rx="2" fill="#4a68b0"/><rect x="1247.95" y="109.00" width="4.7" height="32.80" rx="2" fill="#4a68b0"/><rect x="1253.86" y="58.40" width="4.7" height="83.40" rx="2" fill="#4a68b0"/><rect x="1259.76" y="7.80" width="4.7" height="134.00" rx="2" fill="#4a68b0"/><rect x="1265.67" y="6.80" width="4.7" height="135.00" rx="2" fill="#4a68b0"/><rect x="1271.57" y="21.30" width="4.7" height="120.50" rx="2" fill="#4a68b0"/><rect x="1277.48" y="23.40" width="4.7" height="118.40" rx="2" fill="#4a68b0"/><rect x="1283.38" y="15.00" width="4.7" height="126.80" rx="2" fill="#4a68b0"/><rect x="1289.29" y="9.80" width="4.7" height="132.00" rx="2" fill="#4a68b0"/><rect x="1295.19" y="8.10" width="4.7" height="133.70" rx="2" fill="#4a68b0"/><rect x="1301.10" y="11.00" width="4.7" height="130.80" rx="2" fill="#4a68b0"/><rect x="1307.00" y="6.80" width="4.7" height="135.00" rx="2" fill="#4a68b0"/><rect x="1312.91" y="14.20" width="4.7" height="127.60" rx="2" fill="#4a68b0"/><rect x="1318.81" y="9.80" width="4.7" height="132.00" rx="2" fill="#4a68b0"/><rect x="1324.72" y="8.10" width="4.7" height="133.70" rx="2" fill="#4a68b0"/><rect x="1330.62" y="24.20" width="4.7" height="117.60" rx="2" fill="#4a68b0"/><rect x="1336.53" y="47.10" width="4.7" height="94.70" rx="2" fill="#4a68b0"/><rect x="1342.43" y="9.80" width="4.7" height="132.00" rx="2" fill="#4a68b0"/><rect x="1348.34" y="12.30" width="4.7" height="129.50" rx="2" fill="#4a68b0"/><rect x="1354.24" y="13.80" width="4.7" height="128.00" rx="2" fill="#4a68b0"/><rect x="1360.15" y="8.80" width="4.7" height="133.00" rx="2" fill="#4a68b0"/><rect x="1366.05" y="9.20" width="4.7" height="132.60" rx="2" fill="#4a68b0"/><rect x="1371.96" y="45.00" width="4.7" height="96.80" rx="2" fill="#4a68b0"/><rect x="1377.86" y="49.80" width="4.7" height="92.00" rx="2" fill="#4a68b0"/><rect x="1383.77" y="9.80" width="4.7" height="132.00" rx="2" fill="#4a68b0"/><rect x="1389.67" y="8.10" width="4.7" height="133.70" rx="2" fill="#4a68b0"/><rect x="1395.58" y="15.50" width="4.7" height="126.30" rx="2" fill="#4a68b0"/><rect x="1401.48" y="10.80" width="4.7" height="131.00" rx="2" fill="#4a68b0"/><rect x="1407.39" y="7.80" width="4.7" height="134.00" rx="2" fill="#4a68b0"/><rect x="1413.29" y="7.20" width="4.7" height="134.60" rx="2" fill="#4a68b0"/><rect x="1419.20" y="6.30" width="4.7" height="135.50" rx="2" fill="#4a68b0"/><rect x="1425.10" y="9.80" width="4.7" height="132.00" rx="2" fill="#4a68b0"/><rect x="1431.01" y="39.20" width="4.7" height="102.60" rx="2" fill="#4a68b0"/><rect x="1436.91" y="16.80" width="4.7" height="125.00" rx="2" fill="#4a68b0"/><rect x="1442.82" y="12.30" width="4.7" height="129.50" rx="2" fill="#4a68b0"/><rect x="1448.72" y="9.80" width="4.7" height="132.00" rx="2" fill="#4a68b0"/><rect x="1454.63" y="14.20" width="4.7" height="127.60" rx="2" fill="#4a68b0"/><rect x="1460.53" y="12.30" width="4.7" height="129.50" rx="2" fill="#4a68b0"/><rect x="1466.44" y="18.10" width="4.7" height="123.70" rx="2" fill="#4a68b0"/><rect x="1472.34" y="16.80" width="4.7" height="125.00" rx="2" fill="#4a68b0"/><rect x="1478.25" y="12.30" width="4.7" height="129.50" rx="2" fill="#4a68b0"/><rect x="1484.15" y="22.80" width="4.7" height="119.00" rx="2" fill="#4a68b0"/><rect x="1490.06" y="14.20" width="4.7" height="127.60" rx="2" fill="#4a68b0"/><rect x="1495.96" y="10.80" width="4.7" height="131.00" rx="2" fill="#4a68b0"/><rect x="1501.87" y="12.80" width="4.7" height="129.00" rx="2" fill="#4a68b0"/><rect x="1507.77" y="10.20" width="4.7" height="131.60" rx="2" fill="#4a68b0"/><rect x="1513.68" y="12.10" width="4.7" height="129.70" rx="2" fill="#4a68b0"/><rect x="1519.58" y="13.40" width="4.7" height="128.40" rx="2" fill="#4a68b0"/><rect x="1525.49" y="3.10" width="4.7" height="138.70" rx="2" fill="#4a68b0"/><rect x="1531.39" y="16.80" width="4.7" height="125.00" rx="2" fill="#4a68b0"/><rect x="1537.30" y="9.80" width="4.7" height="132.00" rx="2" fill="#4a68b0"/><rect x="1543.20" y="9.80" width="4.7" height="132.00" rx="2" fill="#4a68b0"/><rect x="1549.11" y="96.60" width="4.7" height="45.20" rx="2" fill="#4a68b0"/><rect x="1555.01" y="20.80" width="4.7" height="121.00" rx="2" fill="#4a68b0"/><rect x="1560.92" y="12.80" width="4.7" height="129.00" rx="2" fill="#4a68b0"/><rect x="1566.82" y="9.20" width="4.7" height="132.60" rx="2" fill="#4a68b0"/><rect x="1572.73" y="46.60" width="4.7" height="95.20" rx="2" fill="#4a68b0"/><rect x="1578.63" y="23.40" width="4.7" height="118.40" rx="2" fill="#4a68b0"/><rect x="1584.54" y="10.20" width="4.7" height="131.60" rx="2" fill="#4a68b0"/><rect x="1590.44" y="9.40" width="4.7" height="132.40" rx="2" fill="#4a68b0"/><rect x="1596.35" y="8.80" width="4.7" height="133.00" rx="2" fill="#4a68b0"/><rect x="1602.25" y="11.00" width="4.7" height="130.80" rx="2" fill="#4a68b0"/><rect x="1608.16" y="15.00" width="4.7" height="126.80" rx="2" fill="#4a68b0"/><rect x="1614.06" y="4.40" width="4.7" height="137.40" rx="2" fill="#4a68b0"/><rect x="1619.97" y="11.00" width="4.7" height="130.80" rx="2" fill="#4a68b0"/><rect x="1625.87" y="12.10" width="4.7" height="129.70" rx="2" fill="#4a68b0"/><rect x="1631.78" y="0.20" width="4.7" height="141.60" rx="2" fill="#4a68b0"/><rect x="1649.49" y="9.80" width="4.7" height="132.00" rx="2" fill="#6f9cf5"/><rect x="1655.40" y="12.30" width="4.7" height="129.50" rx="2" fill="#6f9cf5"/><rect x="1661.30" y="12.30" width="4.7" height="129.50" rx="2" fill="#6f9cf5"/><rect x="1667.21" y="61.60" width="4.7" height="80.20" rx="2" fill="#6f9cf5"/><rect x="1673.11" y="2.30" width="4.7" height="139.50" rx="2" fill="#6f9cf5"/><rect x="1679.02" y="2.80" width="4.7" height="139.00" rx="2" fill="#6f9cf5"/><rect x="1684.92" y="15.00" width="4.7" height="126.80" rx="2" fill="#6f9cf5"/><rect x="1690.83" y="9.20" width="4.7" height="132.60" rx="2" fill="#6f9cf5"/><rect x="1696.73" y="31.30" width="4.7" height="110.50" rx="2" fill="#6f9cf5"/><rect x="1702.64" y="17.10" width="4.7" height="124.70" rx="2" fill="#6f9cf5"/><rect x="1708.54" y="85.30" width="4.7" height="56.50" rx="2" fill="#6f9cf5"/></svg><div class="r" style="left:1817.00px;top:1624.00px;width:17.60px;height:139.80px;background:#4a5069;"></div><div class="r" style="left:1825.00px;top:1644.00px;width:1.60px;height:99.50px;background:#ffffff;"></div><div class="r" style="left:1907.00px;top:1624.00px;width:17.70px;height:139.80px;background:#6b7385;"></div><div class="r" style="left:1915.00px;top:1644.00px;width:1.60px;height:99.50px;background:#ffffff;"></div><div class="r" style="left:181.00px;top:1763.80px;width:1728.00px;height:2.00px;background:#e6e7ef;"></div><div class="r" style="left:407.10px;top:1763.80px;width:2.00px;height:11.50px;background:#e6e7ef;"></div><div class="t w" style="top:1788.48px;font-size:24px;color:#687389;letter-spacing:0.04px;left:408.12px;transform:translateX(-50%);">1:53 PM</div><div class="t w" style="top:1817.08px;font-size:24px;color:#687389;left:408.10px;transform:translateX(-50%);">1 Aug</div><div class="r" style="left:800.70px;top:1763.80px;width:2.00px;height:11.50px;background:#e6e7ef;"></div><div class="t w" style="top:1788.48px;font-size:24px;color:#687389;letter-spacing:0.11px;left:801.75px;transform:translateX(-50%);">7:26 PM</div><div class="t w" style="top:1817.08px;font-size:24px;color:#687389;left:801.70px;transform:translateX(-50%);">1 Aug</div><div class="r" style="left:1194.30px;top:1763.80px;width:2.00px;height:11.50px;background:#e6e7ef;"></div><div class="t w" style="top:1788.48px;font-size:24px;color:#687389;letter-spacing:0.3px;left:1195.45px;transform:translateX(-50%);">1:00 AM</div><div class="t w" style="top:1817.08px;font-size:24px;color:#687389;letter-spacing:0.5px;left:1195.55px;transform:translateX(-50%);">2 Aug</div><div class="r" style="left:1587.90px;top:1763.80px;width:2.00px;height:11.50px;background:#e6e7ef;"></div><div class="t w" style="top:1788.48px;font-size:24px;color:#687389;letter-spacing:0.96px;left:1589.38px;transform:translateX(-50%);">6:33 AM</div><div class="t w" style="top:1817.08px;font-size:24px;color:#687389;letter-spacing:0.55px;left:1589.18px;transform:translateX(-50%);">2 Aug</div><div class="r" style="left:1951.00px;top:478.00px;width:2.00px;height:1400.00px;background:#e3e7f0;"></div><div class="t w" style="top:483.14px;font-size:25px;color:#a3aab9;letter-spacing:0.22px;left:1993.70px;">Trend for Last 60min</div><div class="t" style="top:553.74px;font-size:25px;color:#687389;font-weight:700;left:1993.70px;">Percent</div><div class="t" style="top:766.84px;font-size:25px;color:#687389;font-weight:700;left:1993.70px;">Rate</div><div class="t" style="top:1713.54px;font-size:25px;color:#687389;font-weight:700;left:1993.70px;">Throughput</div><div class="t w" style="top:630.44px;font-size:25px;color:#0f1d54;letter-spacing:-0.061px;left:2059.80px;">Health</div><div class="t w" style="top:630.44px;font-size:25px;color:#0f1d54;letter-spacing:0.183px;right:113.02px;">99.4 /100</div><div class="r" style="left:2059.00px;top:664.70px;width:460.00px;height:44.00px;background:#f6f7f9;"></div><svg class="s" style="left:2059px;top:654px;overflow:visible;" width="460" height="64" viewBox="0 0 460 64"><path d="M4.0,14.5 C26.8,14.6 84.8,14.9 141.0,14.9 C197.2,14.9 288.5,14.6 341.0,14.6 C393.5,14.6 436.8,15.0 456.0,15.1" fill="none" stroke="#9aa1b2" stroke-width="3.6" stroke-linecap="butt"/></svg><div class="r" style="left:2041.5px;top:825.2px;width:495px;height:115px;background:#f5f6f9;border:2px solid #6f9cf5;border-radius:9px;box-sizing:border-box;box-shadow:0 10px 24px rgba(30,40,80,0.10)"></div><div class="r" style="left:1995.3px;top:827.5px;width:35.3px;height:34.6px;background:#fff;border:2px solid #e0e4ed;border-radius:6px;box-sizing:border-box"></div><div class="r" style="left:2002.70px;top:834.00px;width:7.70px;height:21.70px;background:#6f9cf5;border-radius:3px 3px 0 0;"></div><div class="r" style="left:2015.50px;top:841.00px;width:7.50px;height:14.70px;background:#9aa1b2;border-radius:3px 3px 0 0;"></div><div class="t" style="top:843.24px;font-size:25px;color:#0f1d54;font-weight:700;letter-spacing:-0.447px;left:2059.80px;">Request Rate</div><div class="t" style="top:843.24px;font-size:25px;color:#0f1d54;font-weight:700;letter-spacing:0.716px;right:112.48px;">4/s</div><svg class="s" style="left:2059px;top:-10px;overflow:visible;" width="460" height="20" viewBox="0 0 460 20"><path d="M4.0,891.7 C16.8,891.9 54.9,892.6 81.0,893.0 C107.1,893.4 135.9,893.0 160.5,893.8 C185.1,894.6 205.5,897.9 228.6,897.6 C251.7,897.3 274.4,892.7 299.3,892.2 C324.3,891.7 352.2,892.6 378.3,894.4 C404.4,896.2 443.1,901.6 456.0,903.1" fill="none" stroke="#6f9cf5" stroke-width="3.6" stroke-linecap="butt"/></svg><div class="t w" style="top:966.34px;font-size:25px;color:#0f1d54;letter-spacing:-0.36px;left:2059.80px;">Error Rate</div><div class="t w" style="top:966.34px;font-size:25px;color:#0f1d54;letter-spacing:0.317px;right:112.88px;">0.54/s</div><div class="r" style="left:2059.00px;top:1000.30px;width:460.00px;height:43.40px;background:#f6f7f9;"></div><svg class="s" style="left:2059px;top:990px;overflow:visible;" width="460" height="63" viewBox="0 0 460 63"><path d="M4.0,13.9 C16.7,15.0 54.2,20.0 80.0,20.3 C105.8,20.6 134.9,15.8 158.7,15.5 C182.5,15.2 199.4,18.1 223.0,18.7 C246.6,19.3 272.7,19.3 300.0,19.3 C327.3,19.3 360.7,19.6 386.6,18.7 C412.5,17.8 444.1,14.7 455.6,13.9" fill="none" stroke="#9aa1b2" stroke-width="3.6" stroke-linecap="butt"/></svg><div class="t w" style="top:1087.94px;font-size:25px;color:#0f1d54;letter-spacing:-0.097px;left:2059.80px;">Error Rate 4xx</div><div class="t w" style="top:1087.94px;font-size:25px;color:#0f1d54;letter-spacing:0.317px;right:112.88px;">0.53/s</div><div class="r" style="left:2059.00px;top:1122.00px;width:460.00px;height:43.60px;background:#f6f7f9;"></div><svg class="s" style="left:2059px;top:1112px;overflow:visible;" width="460" height="63" viewBox="0 0 460 63"><path d="M4.0,13.5 C16.7,14.7 54.2,20.2 80.0,20.6 C105.8,21.0 134.9,16.0 158.7,15.7 C182.5,15.4 199.4,18.3 223.0,19.0 C246.6,19.7 272.7,19.8 300.0,19.9 C327.3,20.1 360.7,20.6 386.6,19.9 C412.5,19.2 444.1,16.4 455.6,15.7" fill="none" stroke="#9aa1b2" stroke-width="3.6" stroke-linecap="butt"/></svg><div class="t w" style="top:1210.24px;font-size:25px;color:#0f1d54;letter-spacing:-0.161px;left:2059.80px;">Error Rate 5xx</div><div class="t w" style="top:1210.24px;font-size:25px;color:#0f1d54;letter-spacing:-0.383px;right:113.58px;">0.01/s</div><div class="r" style="left:2059.00px;top:1245.20px;width:460.00px;height:43.30px;background:#f6f7f9;"></div><svg class="s" style="left:2059px;top:1235px;overflow:visible;" width="460" height="63" viewBox="0 0 460 63"><path d="M4,50.2 L275,50.2 C308,50.2 328,37 358.5,28.7 C382,22.5 420,18 455.1,13.7" fill="none" stroke="#9aa1b2" stroke-width="3.6" stroke-linecap="butt"/></svg><div class="t w" style="top:1332.84px;font-size:25px;color:#0f1d54;letter-spacing:-0.133px;left:2059.80px;">Error Rate Client</div><div class="t w" style="top:1332.84px;font-size:25px;color:#0f1d54;letter-spacing:0.317px;right:112.88px;">0/s</div><div class="r" style="left:2059.00px;top:1366.80px;width:460.00px;height:44.00px;background:#f6f7f9;"></div><div class="t w" style="top:1454.84px;font-size:25px;color:#0f1d54;letter-spacing:-0.058px;left:2059.80px;">Error Rate Upstream</div><div class="t w" style="top:1454.84px;font-size:25px;color:#0f1d54;letter-spacing:0.317px;right:112.88px;">0/s</div><div class="r" style="left:2059.00px;top:1490.50px;width:460.00px;height:43.00px;background:#f6f7f9;"></div><div class="t w" style="top:1577.84px;font-size:25px;color:#0f1d54;letter-spacing:-0.249px;left:2059.80px;">Drop Rate</div><div class="t w" style="top:1577.84px;font-size:25px;color:#0f1d54;letter-spacing:0.317px;right:112.88px;">0/s</div><div class="r" style="left:2059.00px;top:1611.80px;width:460.00px;height:44.00px;background:#f6f7f9;"></div><div class="t w" style="top:1789.64px;font-size:25px;color:#0f1d54;letter-spacing:0.278px;left:2059.80px;">Upstream Throughput</div><div class="t w" style="top:1789.64px;font-size:25px;color:#0f1d54;letter-spacing:0.155px;right:113.04px;">24.5kbps</div><div class="r" style="left:2059.00px;top:1825.20px;width:460.00px;height:54.80px;background:#f6f7f9;"></div><svg class="s" style="left:2059px;top:1815px;overflow:visible;" width="460" height="74" viewBox="0 0 460 74"><path d="M4.0,13.2 C30.3,13.5 125.5,13.7 162.0,14.8 C198.5,15.9 200.0,19.8 223.0,19.6 C246.0,19.4 272.7,14.3 300.0,13.8 C327.3,13.3 360.7,14.6 386.6,16.4 C412.5,18.2 444.1,23.1 455.6,24.5" fill="none" stroke="#9aa1b2" stroke-width="3.6" stroke-linecap="butt"/></svg><div class="r" style="left:2577.00px;top:478.00px;width:14.60px;height:873.00px;background:#e6e9f0;border-radius:8px;"></div><div class="r" style="left:0;top:1846px;width:2631px;height:30px;background:linear-gradient(rgba(0,0,0,0),rgba(20,20,40,0.07))"></div>
</body></html>
